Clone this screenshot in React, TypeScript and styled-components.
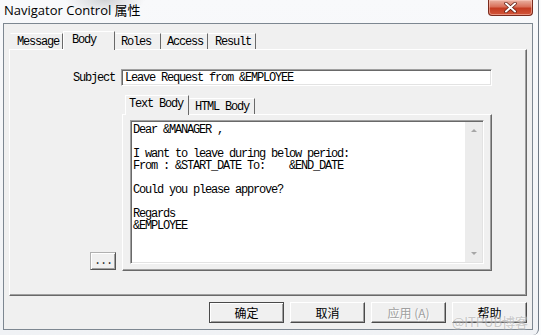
import React from 'react';
import styled, { createGlobalStyle } from 'styled-components';

const MONO = `"Liberation Mono", "Noto Sans CJK SC", monospace`;
const CJK = `"Noto Sans CJK SC", "Noto Sans", sans-serif`;

const GlobalStyle = createGlobalStyle`
  html, body {
    margin: 0;
    padding: 0;
  }
  body {
    width: 541px;
    height: 335px;
    overflow: hidden;
    background: #fbfcfd;
  }
  * {
    box-sizing: border-box;
  }
`;

const Window = styled.div`
  position: relative;
  width: 539px;
  height: 335px;
  border-right: 1px solid #6f7984;
  border-bottom-right-radius: 6px;
  background:
    radial-gradient(ellipse 40px 14px at 105px 0px, rgba(120, 125, 130, 0.3), rgba(0, 0, 0, 0)),
    linear-gradient(180deg, #f8f9fb 0%, #f0f2f5 100%);
  display: flex;
  flex-direction: column;
`;

const TitleBar = styled.div`
  height: 23px;
  display: flex;
  align-items: flex-start;
  justify-content: space-between;
  padding: 0 5px 0 4px;
`;

const Title = styled.div`
  font-family: "Open Sans", "Noto Sans CJK SC", sans-serif;
  font-size: 13px;
  line-height: 18px;
  padding-top: 1px;
  color: #000;
`;

const CloseButton = styled.div`
  width: 45px;
  height: 16px;
  border: 1px solid #7a2a1c;
  border-top: none;
  border-radius: 0 0 4px 4px;
  background: linear-gradient(180deg, #eab2a2 0%, #d9705a 45%, #c43c22 55%, #d2563a 100%);
  box-shadow: inset 0 0 0 1px rgba(255, 210, 200, 0.5);
  display: flex;
  align-items: center;
  justify-content: center;
`;

const Client = styled.div`
  margin-left: 3px;
  width: 530px;
  height: 307px;
  border: 1px solid #7d8791;
  background: #f0f0f0;
  padding: 7px 5px 0 5px;
  display: flex;
  flex-direction: column;
`;

const TabControl = styled.div<{ $w: number }>`
  width: ${(p) => p.$w}px;
  display: flex;
  flex-direction: column;
`;

const TabRow = styled.div<{ $h: number; $pl: number }>`
  height: ${(p) => p.$h}px;
  padding-left: ${(p) => p.$pl}px;
  display: flex;
  align-items: flex-end;
`;

const Tab = styled.div<{ $active?: boolean; $w: number; $pl: number }>`
  position: relative;
  width: ${(p) => p.$w}px;
  height: ${(p) => (p.$active ? 'auto' : '16px')};
  align-self: ${(p) => (p.$active ? 'stretch' : 'flex-end')};
  margin-bottom: ${(p) => (p.$active ? '-1px' : '0')};
  z-index: ${(p) => (p.$active ? 1 : 0)};
  padding: 1px 0 0 ${(p) => p.$pl}px;
  background: #f0f0f0;
  border-top: 1px solid #fff;
  border-left: 1px solid ${(p) => (p.$active ? '#fff' : 'transparent')};
  border-right: 1px solid #696969;
  font-family: ${MONO};
  font-size: 12px;
  letter-spacing: -1.2px;
  line-height: 14px;
  color: #000;
  white-space: pre;
`;

const Panel = styled.div<{ $h: number }>`
  height: ${(p) => p.$h}px;
  border-top: 1px solid #fff;
  border-left: 1px solid #fff;
  border-right: 1px solid #696969;
  border-bottom: 1px solid #696969;
  box-shadow: inset -1px -1px 0 #a0a0a0;
`;

const BodyGrid = styled.div`
  display: grid;
  grid-template-columns: 111px 371px;
  grid-template-rows: 17px 176px;
  row-gap: 9px;
  padding-top: 19px;
`;

const FieldLabel = styled.div`
  align-self: center;
  justify-self: end;
  padding: 2px 6px 0 0;
  font-family: ${MONO};
  font-size: 12px;
  letter-spacing: -1.2px;
  line-height: 13px;
  color: #000;
`;

const TextInput = styled.div`
  height: 17px;
  background: #fff;
  border-top: 1px solid #a0a0a0;
  border-left: 1px solid #a0a0a0;
  border-right: 1px solid #fff;
  border-bottom: 1px solid #fff;
  box-shadow: inset 1px 1px 0 #696969, inset -1px -1px 0 #e3e3e3;
  padding: 2px 0 0 3px;
  font-family: ${MONO};
  font-size: 12px;
  letter-spacing: -1.2px;
  line-height: 13px;
  color: #000;
  white-space: pre;
`;

const EllipsisButton = styled.div`
  align-self: end;
  justify-self: end;
  width: 26px;
  height: 18px;
  margin: 0 5px 1px 0;
  background: #f0f0f0;
  border-top: 1px solid #b0b0b0;
  border-left: 1px solid #b0b0b0;
  border-right: 1px solid #555;
  border-bottom: 1px solid #555;
  box-shadow: inset 1px 1px 0 #fff, inset -1px -1px 0 #a0a0a0;
  display: flex;
  align-items: flex-end;
  justify-content: center;
  font-family: ${MONO};
  font-size: 12px;
  letter-spacing: -1.2px;
  line-height: 12px;
  color: #333;
  padding-bottom: 2px;
`;

const InnerWrap = styled.div`
  margin-left: 1px;
`;

const InnerPanelBody = styled.div`
  height: 100%;
  padding: 5px 7px 6px 7px;
`;

const TextArea = styled.div`
  height: 144px;
  display: flex;
  background: #fff;
  border-top: 1px solid #a0a0a0;
  border-left: 1px solid #a0a0a0;
  border-right: 1px solid #fff;
  border-bottom: 1px solid #fff;
  box-shadow: inset 1px 1px 0 #696969, inset -1px -1px 0 #e3e3e3;
  padding: 1px;
`;

const TextContent = styled.pre`
  flex: 1;
  margin: 0;
  padding: 2px 0 0 1px;
  font-family: ${MONO};
  font-size: 12px;
  letter-spacing: -1.2px;
  line-height: 12px;
  color: #000;
`;

const ScrollBar = styled.div`
  width: 17px;
  background: #ececec;
  display: flex;
  flex-direction: column;
  justify-content: space-between;
`;

const ScrollArrow = styled.div<{ $dir: 'up' | 'down' }>`
  height: 17px;
  display: flex;
  align-items: center;
  justify-content: center;
  &::before {
    content: '';
    width: 0;
    height: 0;
    border-left: 3px solid transparent;
    border-right: 3px solid transparent;
    ${(p) =>
      p.$dir === 'up'
        ? 'border-bottom: 3px solid #a6a6a6;'
        : 'border-top: 3px solid #a6a6a6;'}
  }
`;

const ButtonRow = styled.div`
  margin-top: 6px;
  display: flex;
  justify-content: flex-end;
  gap: 6px;
`;

const DialogButton = styled.div<{ $default?: boolean; $disabled?: boolean }>`
  width: 75px;
  height: 21px;
  background: #f0f0f0;
  border: 1px solid ${(p) => (p.$default ? '#4a4a4a' : 'transparent')};
  border-top-color: ${(p) => (p.$default ? '#4a4a4a' : '#fff')};
  border-left-color: ${(p) => (p.$default ? '#4a4a4a' : '#fff')};
  border-right-color: #4a4a4a;
  border-bottom-color: #4a4a4a;
  box-shadow: ${(p) =>
    p.$default
      ? 'inset 1px 1px 0 #fff, inset -1px -1px 0 #a0a0a0'
      : 'inset -1px -1px 0 #a0a0a0'};
  display: flex;
  align-items: center;
  justify-content: center;
  font-family: ${CJK};
  font-size: 12px;
  line-height: 14px;
  color: ${(p) => (p.$disabled ? '#a0a0a0' : '#000')};
  text-shadow: ${(p) => (p.$disabled ? '1px 1px 0 #fff' : 'none')};
  white-space: pre;
`;

const Watermark = styled.div`
  position: absolute;
  right: 10px;
  bottom: 6px;
  font-family: ${CJK};
  font-size: 13px;
  line-height: 15px;
  color: rgba(150, 150, 150, 0.5);
  text-shadow: 0 0 2px rgba(255, 255, 255, 0.9);
  pointer-events: none;
`;

const bodyText = `Dear &MANAGER ,

I want to leave during below period:
From : &START_DATE To:    &END_DATE

Could you please approve?

Regards
&EMPLOYEE`;

const outerTabs = [
  { label: 'Message', w: 53, pl: 6 },
  { label: 'Body', w: 52, pl: 8, active: true },
  { label: 'Roles', w: 46, pl: 5 },
  { label: 'Access', w: 47, pl: 5 },
  { label: 'Result', w: 48, pl: 6 },
];

const innerTabs = [
  { label: 'Text Body', w: 64, pl: 3, active: true },
  { label: 'HTML Body', w: 66, pl: 5 },
];

const App: React.FC = () => {
  return (
    <>
      <GlobalStyle />
      <Window>
        <TitleBar>
          <Title>Navigator Control 属性</Title>
          <CloseButton>
            <svg width="13" height="11" viewBox="0 0 13 11">
              <path d="M2 1.5 L11 9.5 M11 1.5 L2 9.5" stroke="#5a1a10" strokeWidth="3.4" strokeLinecap="round" />
              <path d="M2 1.5 L11 9.5 M11 1.5 L2 9.5" stroke="#fff" strokeWidth="2" strokeLinecap="round" />
            </svg>
          </CloseButton>
        </TitleBar>
        <Client>
          <TabControl $w={518}>
            <TabRow $h={18} $pl={1}>
              {outerTabs.map((t) => (
                <Tab key={t.label} $active={t.active} $w={t.w} $pl={t.pl}>
                  {t.label}
                </Tab>
              ))}
            </TabRow>
            <Panel $h={247}>
              <BodyGrid>
                <FieldLabel>Subject</FieldLabel>
                <TextInput>Leave Request from &amp;EMPLOYEE</TextInput>
                <EllipsisButton>...</EllipsisButton>
                <InnerWrap>
                  <TabControl $w={370}>
                    <TabRow $h={19} $pl={3}>
                      {innerTabs.map((t) => (
                        <Tab key={t.label} $active={t.active} $w={t.w} $pl={t.pl}>
                          {t.label}
                        </Tab>
                      ))}
                    </TabRow>
                    <Panel $h={157}>
                      <InnerPanelBody>
                        <TextArea>
                          <TextContent>{bodyText}</TextContent>
                          <ScrollBar>
                            <ScrollArrow $dir="up" />
                            <ScrollArrow $dir="down" />
                          </ScrollBar>
                        </TextArea>
                      </InnerPanelBody>
                    </Panel>
                  </TabControl>
                </InnerWrap>
              </BodyGrid>
            </Panel>
          </TabControl>
          <ButtonRow>
            <DialogButton $default>确定</DialogButton>
            <DialogButton>取消</DialogButton>
            <DialogButton $disabled>应用 (A)</DialogButton>
            <DialogButton>帮助</DialogButton>
          </ButtonRow>
        </Client>
        <Watermark>@ITPUB博客</Watermark>
      </Window>
    </>
  );
};

export default App;
